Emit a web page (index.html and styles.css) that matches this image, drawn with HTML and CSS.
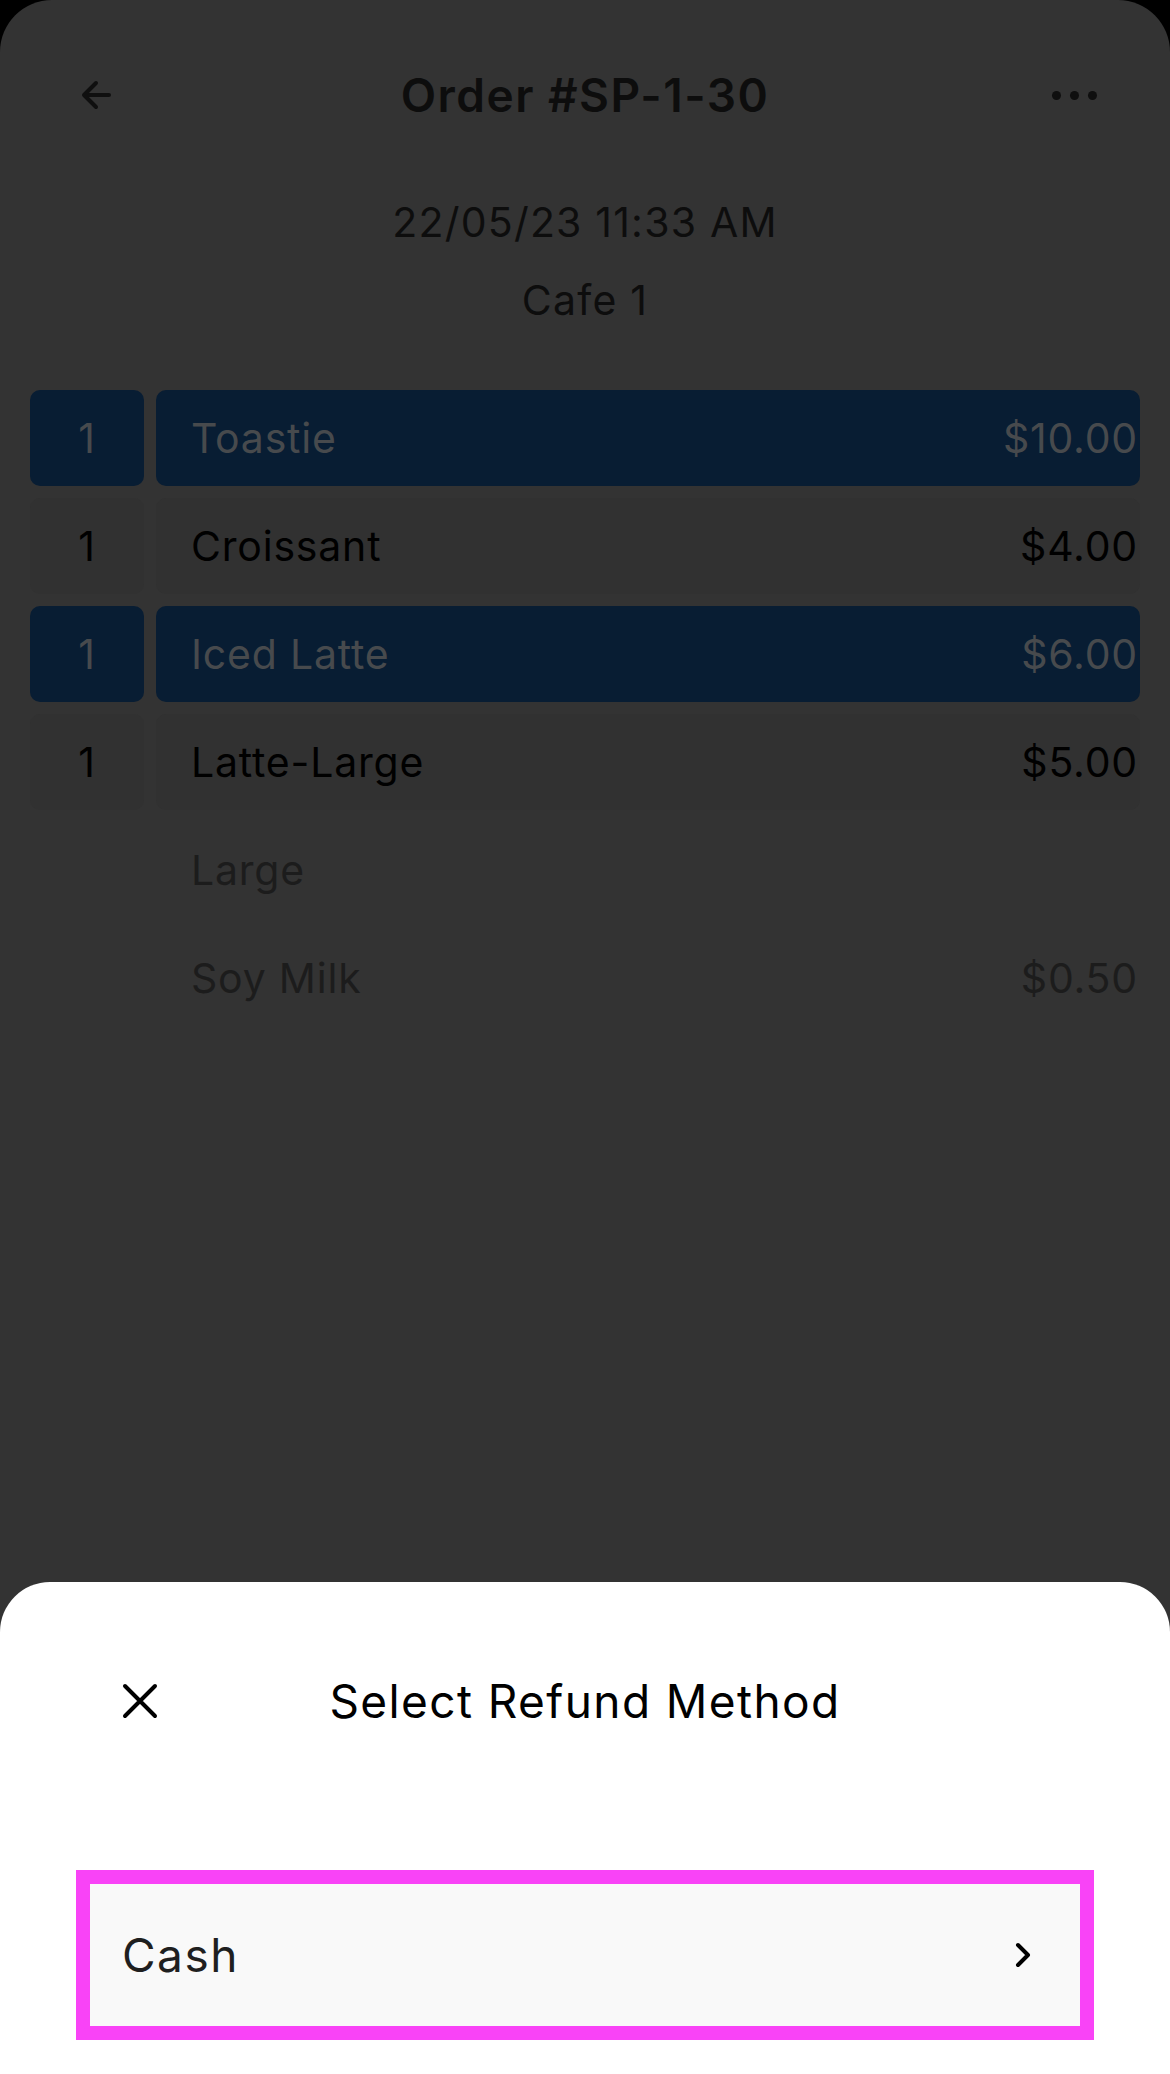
FILE: index.html
```html
<!DOCTYPE html>
<html>
<head>
<meta charset="utf-8">
<link rel="stylesheet" href="styles.css">
</head>
<body>
<div class="screen">
  <header class="topbar">
    <button class="icon-btn" aria-label="Back">
      <svg width="30" height="30" viewBox="0 0 30 30"><path d="M3 15H28M15 3L3 15L15 27" fill="none" stroke="#0f0f0f" stroke-width="4" stroke-linecap="round" stroke-linejoin="round"/></svg>
    </button>
    <h1 class="title">Order #SP-1-30</h1>
    <button class="icon-btn" aria-label="More">
      <span class="dots"><i></i><i></i><i></i></span>
    </button>
  </header>
  <div class="meta">
    <div class="meta-line">22/05/23 11:33 AM</div>
    <div class="meta-line meta-store">Cafe 1</div>
  </div>
  <div class="items">
    <div class="row selected"><div class="qty">1</div><div class="name-box"><span>Toastie</span><span>$10.00</span></div></div>
    <div class="row"><div class="qty">1</div><div class="name-box"><span>Croissant</span><span>$4.00</span></div></div>
    <div class="row selected"><div class="qty">1</div><div class="name-box"><span>Iced Latte</span><span>$6.00</span></div></div>
    <div class="row"><div class="qty">1</div><div class="name-box"><span>Latte-Large</span><span>$5.00</span></div></div>
    <div class="row mod"><div class="qty"></div><div class="name-box"><span>Large</span><span></span></div></div>
    <div class="row mod"><div class="qty"></div><div class="name-box"><span>Soy Milk</span><span>$0.50</span></div></div>
  </div>

  <div class="sheet">
    <div class="sheet-head">
      <button class="icon-btn close" aria-label="Close">
        <svg width="36" height="36" viewBox="0 0 36 36"><path d="M3 3L33 33M33 3L3 33" fill="none" stroke="#000" stroke-width="4" stroke-linecap="round"/></svg>
      </button>
      <h2 class="sheet-title">Select Refund Method</h2>
    </div>
    <div class="option">
      <span class="option-label">Cash</span>
      <svg width="16" height="26" viewBox="0 0 16 26"><path d="M3 3L13 13L3 23" fill="none" stroke="#000" stroke-width="4" stroke-linecap="round" stroke-linejoin="round"/></svg>
    </div>
  </div>
</div>
</body>
</html>
```

FILE: styles.css
```css
* { box-sizing: border-box; }
html, body {
  margin: 0;
  padding: 0;
  background: #000;
}
body {
  font-family: Inter, "Noto Sans", "Liberation Sans", sans-serif;
  width: 1170px;
  height: 2074px;
  overflow: hidden;
}
.screen {
  position: relative;
  width: 1170px;
  height: 2074px;
  background: #333333;
  border-radius: 52px 52px 0 0;
  overflow: hidden;
}
button {
  border: 0;
  background: none;
  padding: 0;
  margin: 0;
  font: inherit;
}
.topbar {
  display: flex;
  align-items: center;
  justify-content: space-between;
  height: 80px;
  margin-top: 55px;
  padding: 0 74px;
}
.icon-btn {
  width: 44px;
  height: 44px;
  display: flex;
  align-items: center;
  justify-content: center;
}
.title {
  margin: 0;
  font-size: 46px;
  font-weight: 600;
  color: #0d0d0d;
  letter-spacing: 1.5px;
}
.dots {
  display: flex;
  gap: 9px;
}
.dots i {
  width: 9px;
  height: 9px;
  border-radius: 50%;
  background: #0f0f0f;
  display: block;
}
.meta {
  margin-top: 62px;
  display: flex;
  flex-direction: column;
  align-items: center;
  color: #0d0d0d;
  font-size: 41px;
  letter-spacing: 1.2px;
}
.meta-line { line-height: 50px; }
.meta-store { margin-top: 28px; }

.items {
  margin-top: 65px;
  padding: 0 30px;
  display: flex;
  flex-direction: column;
  gap: 12px;
}
.row {
  display: grid;
  grid-template-columns: 114px 1fr;
  gap: 12px;
  height: 96px;
  font-size: 41px;
  letter-spacing: 0.8px;
  color: #000;
}
.qty {
  display: flex;
  align-items: center;
  justify-content: center;
  border-radius: 10px;
  background: #313131;
}
.name-box {
  display: flex;
  align-items: center;
  justify-content: space-between;
  padding: 0 2px 0 35px;
  border-radius: 10px;
  background: #313131;
}
.row.selected .qty,
.row.selected .name-box {
  background: #081d33;
  color: #474a4d;
}
.row.mod { color: #1c1c1c; }
.row.mod .qty,
.row.mod .name-box { background: transparent; }

.sheet {
  position: absolute;
  left: 0;
  right: 0;
  bottom: 0;
  height: 492px;
  background: #fff;
  border-radius: 50px 50px 0 0;
}
.sheet-head {
  position: relative;
  margin-top: 79px;
  height: 80px;
  display: flex;
  align-items: center;
  justify-content: center;
}
.close {
  position: absolute;
  left: 118px;
  top: 18px;
}
.sheet-title {
  margin: 0;
  font-size: 46px;
  font-weight: 400;
  color: #000;
  letter-spacing: 1.4px;
}
.option {
  margin: 129px 76px 0;
  height: 170px;
  border: 14px solid #f943f7;
  background: #f9f9f9;
  display: flex;
  align-items: center;
  justify-content: space-between;
  padding: 0 49px 0 32px;
}
.option-label {
  font-size: 46px;
  letter-spacing: 1.5px;
  color: #1f1f1f;
}
```
